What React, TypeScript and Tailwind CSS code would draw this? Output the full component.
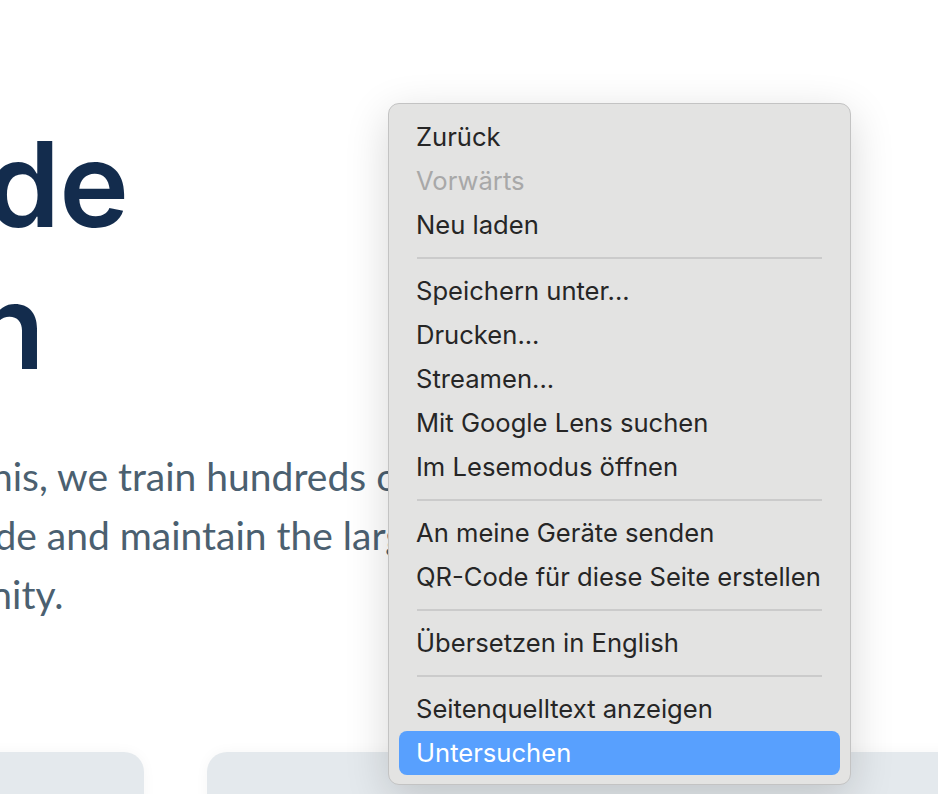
import type { ReactNode } from "react";

type MenuEntry =
  | { kind: "item"; label: string; disabled?: boolean; active?: boolean }
  | { kind: "sep" };

const menu: MenuEntry[] = [
  { kind: "item", label: "Zurück" },
  { kind: "item", label: "Vorwärts", disabled: true },
  { kind: "item", label: "Neu laden" },
  { kind: "sep" },
  { kind: "item", label: "Speichern unter..." },
  { kind: "item", label: "Drucken..." },
  { kind: "item", label: "Streamen..." },
  { kind: "item", label: "Mit Google Lens suchen" },
  { kind: "item", label: "Im Lesemodus öffnen" },
  { kind: "sep" },
  { kind: "item", label: "An meine Geräte senden" },
  { kind: "item", label: "QR-Code für diese Seite erstellen" },
  { kind: "sep" },
  { kind: "item", label: "Übersetzen in English" },
  { kind: "sep" },
  { kind: "item", label: "Seitenquelltext anzeigen" },
  { kind: "item", label: "Untersuchen", active: true },
];

// each line is pushed to the right edge so the start runs off the left side of the viewport
const ClippedLine = ({ edge, children }: { edge: string; children: ReactNode }) => (
  <div className={`flex justify-end ${edge}`}>
    <span className="whitespace-nowrap">{children}</span>
  </div>
);

const ContextMenu = () => (
  <div className="absolute left-[388px] top-[103px] w-[463px] rounded-[11px] border border-[#c3c3c3] bg-[#e3e3e2] pt-[11px] pb-[9px] shadow-[0_12px_44px_rgba(0,0,0,0.16)] font-['Inter',sans-serif] text-[25.6px]">
    {menu.map((entry, i) =>
      entry.kind === "sep" ? (
        <div key={i} className="flex h-[22px] items-center px-[28px]">
          <div className="h-[2px] w-full bg-[#cbcbcb]" />
        </div>
      ) : (
        <div key={i} className="px-[10px]">
          <div
            className={
              entry.active
                ? "h-[44px] rounded-[8px] bg-[#58a0fe] pl-[17px] leading-[44px] text-white"
                : entry.disabled
                  ? "h-[44px] pl-[17px] leading-[44px] text-[#a8a8a8]"
                  : "h-[44px] pl-[17px] leading-[44px] text-[#262626]"
            }
          >
            {entry.label}
          </div>
        </div>
      )
    )}
  </div>
);

export default function App() {
  return (
    <div className="relative h-[794px] w-[938px] overflow-hidden bg-white">
      <div className="flex flex-col pt-[113px]">
        <h1 className="font-['Inter',sans-serif] text-[118px] font-semibold leading-[142px] tracking-[-1px] text-[#132c4d]">
          <ClippedLine edge="w-[128px]">Open Source Code</ClippedLine>
          <ClippedLine edge="w-[44px]">Foundation</ClippedLine>
        </h1>

        <div className="mt-[50px] font-['Lato',sans-serif] text-[39px] leading-[59px] text-[#4b6070]">
          <div className="-ml-[23px] whitespace-nowrap">this, we train hundreds of developers each year</div>
          <div className="-ml-[46px] whitespace-nowrap">code and maintain the largest open source</div>
          <div className="-ml-[136px] whitespace-nowrap">community.</div>
        </div>

        <div className="mt-[128px] flex gap-[63px]">
          <div className="-ml-[156px] h-[200px] w-[300px] shrink-0 rounded-[20px] bg-[#e4e9ed] shadow-[0_0_14px_rgba(0,0,0,0.04)]" />
          <div className="h-[200px] w-[900px] shrink-0 rounded-[20px] bg-[#e4e9ed] shadow-[0_0_14px_rgba(0,0,0,0.04)]" />
        </div>
      </div>

      <ContextMenu />
    </div>
  );
}
